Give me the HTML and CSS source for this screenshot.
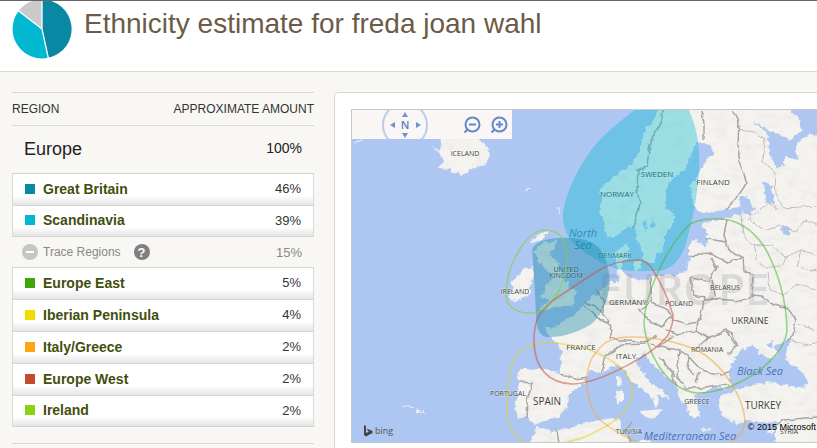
FILE: index.html
```
<!DOCTYPE html>
<html lang="en">
	<head>
		<meta charset="utf-8">
		<title>Ethnicity estimate</title>
		<link rel="stylesheet" href="styles.css">
	</head>
	<body>
		<header>
			<svg class="pie" viewBox="0 0 60 60" aria-hidden="true">
				<path fill="#0a87a3" d="M30 30V0.500A29.500 29.500 0 0 1 36.500 58.800Z"/>
				<path fill="#00b9d1" d="M30 30L36.500 58.800A29.500 29.500 0 0 1 6.700 12Z"/>
				<path fill="#cacaca" d="M30 30L6.700 12A29.500 29.500 0 0 1 30 0.500Z"/>
				<path fill="none" stroke="#fff" stroke-width="1.300" d="M30 0V30L36.500 60M30 30L6 11.500"/>
			</svg>
			<h1>Ethnicity estimate for freda joan wahl</h1>
		</header>
		<main>
			<section class="regions">
				<table>
					<thead>
						<tr><th>REGION</th><th class="amount">APPROXIMATE AMOUNT</th></tr>
					</thead>
					<tbody>
						<tr class="total"><td>Europe</td><td class="amount">100%</td></tr>
						<tr class="region"><td><a href="#"><i class="swatch britain"></i>Great Britain</a></td><td class="amount">46%</td></tr>
						<tr class="region last"><td><a href="#"><i class="swatch scandinavia"></i>Scandinavia</a></td><td class="amount">39%</td></tr>
						<tr class="trace">
							<td>
								<div class="trace-label">
									<button class="round toggle" aria-label="Hide trace regions"></button>
									<span>Trace Regions</span>
									<button class="round help" aria-label="Help">?</button>
								</div>
							</td>
							<td class="amount">15%</td>
						</tr>
						<tr class="region"><td><a href="#"><i class="swatch east"></i>Europe East</a></td><td class="amount">5%</td></tr>
						<tr class="region"><td><a href="#"><i class="swatch iberia"></i>Iberian Peninsula</a></td><td class="amount">4%</td></tr>
						<tr class="region"><td><a href="#"><i class="swatch italy"></i>Italy/Greece</a></td><td class="amount">2%</td></tr>
						<tr class="region"><td><a href="#"><i class="swatch west"></i>Europe West</a></td><td class="amount">2%</td></tr>
						<tr class="region last"><td><a href="#"><i class="swatch ireland"></i>Ireland</a></td><td class="amount">2%</td></tr>
					</tbody>
				</table>
			</section>
			<section class="map-panel">
				<div class="map">
					<svg class="map-canvas" viewBox="352 110 465 332" preserveAspectRatio="xMinYMin slice" role="img" aria-label="Map of Europe">
						<defs>
							<filter id="coast" x="0" y="0" width="100%" height="100%">
								<feTurbulence type="fractalNoise" baseFrequency="0.18" numOctaves="3" seed="4"/>
								<feDisplacementMap in="SourceGraphic" scale="6" xChannelSelector="R" yChannelSelector="G"/>
							</filter>
							<filter id="frontier" x="0" y="0" width="100%" height="100%">
								<feTurbulence type="fractalNoise" baseFrequency="0.12" numOctaves="2" seed="4"/>
								<feDisplacementMap in="SourceGraphic" scale="5" xChannelSelector="R" yChannelSelector="G"/>
							</filter>
							<filter id="relief" x="0" y="0" width="100%" height="100%">
								<feTurbulence type="fractalNoise" baseFrequency="0.07 0.14" numOctaves="4" seed="9"/>
								<feColorMatrix values="0 0 0 0 0.600  0 0 0 0 0.580  0 0 0 0 0.560  0 0 0 1.800 -0.800"/>
								<feComposite in2="SourceGraphic" operator="in"/>
							</filter>
							<g id="land">
								<!-- mainland, clockwise from northern Norway -->
								<path d="M662 100L655 118L645 130L640 150L632 165L619 172L609 182L599 190L602 200L599 210L605 220L604 230L609 237L620 233L630 225L635 228L637 240L642 253L645 263L654 263L657 253L664 250L664 237L674 223L672 213L665 207L667 187L674 177L687 167L689 157L697 142L710 145L714 153L704 163L699 173L692 182L690 187L694 207L702 214L724 210L742 206L742 214L724 218L704 223L702 228L708 233L706 247L694 240L689 247L689 260L687 270L677 275L660 275L644 280L630 278L624 275L622 262L629 255L627 243L615 253L617 268L619 282L610 282L602 290L584 305L575 315L562 322L558 327L545 328L548 335L557 343L562 352L560 372L545 370L525 368L516 373L520 382L517 398L515 408L518 418L528 418L535 425L545 420L558 418L567 408L568 395L585 383L584 378L590 370L602 373L614 365L624 368L630 380L644 390L652 397L655 408L660 402L657 395L669 398L660 388L649 382L640 368L635 362L645 353L650 362L664 375L677 387L680 398L687 408L692 417L700 417L697 405L694 395L704 392L714 387L724 388L732 385L729 372L734 360L740 352L754 343L759 353L769 360L777 355L774 348L784 340L792 337L787 350L785 360L804 373L807 383L804 388L784 385L767 382L744 388L730 392L720 397L719 408L724 418L737 423L750 420L764 423L777 422L774 446H830V100Z"/>
								<!-- Britain and Ireland -->
								<path d="M541 243L556 241L554 249L549 254L556 260L560 270L565 279L569 288L577 290L574 300L572 306L555 307L543 310L539 308L549 301L541 297L546 291L544 284L551 281L550 273L544 268L538 262L534 252Z"/>
								<path d="M524 269L533 267L534 276L531 285L531 294L521 299L512 301L508 296L514 290L511 282L516 278Z"/>
								<path d="M531 241L540 234L549 230L544 237L534 244Z"/>
								<!-- Iceland -->
								<path d="M436 110L441 152L431 144L441 155L444 160L438 168L450 169L453 173L463 175L475 168L485 165L490 155L487 145L478 140L470 130Z"/>
								<!-- Mediterranean islands and the African coast -->
								<path d="M616 377L621 376L622 385L618 387ZM616 391L623 389L623 401L617 404ZM640 411L662 409L658 417L649 419ZM702 428L714 430L703 431ZM767 432L777 427L771 434ZM530 442L537 427L552 431L570 428L590 422L612 418L621 421L620 432L630 438L631 446H530ZM640 440L655 442V448H640Z"/>
								<path d="M618 255L625 248L624 260ZM634 263L641 259L641 269L635 271Z"/>
							</g>
							<g id="water">
								<path d="M752 121L767 129L790 140L802 130L800 120L790 108H830V135L810 134L800 140L795 152L799 160L784 157L785 165L777 168L769 153L767 133Z"/>
								<path d="M739 195L750 199L755 210L750 216L742 211ZM763 181L771 185L775 202L766 203ZM782 224L790 227L790 237L783 235ZM767 344L773 341L772 349Z"/>
								<path d="M641 222L648 221L646 231ZM651 219L656 226L651 229Z"/>
							</g>
						</defs>
						<rect x="352" y="110" width="2000" height="332" fill="#adc7f2"/>
						<g filter="url(#coast)">
							<use href="#land" fill="#f5f3f0"/>
							<use href="#water" fill="#adc7f2"/>
							<path fill="none" stroke="#f5f3f0" d="M524 190L530 188M557 207L560 214M403 406L415 408M416 410L424 412M352 143L362 140"/>
						</g>
						<use href="#land" fill="#fff" filter="url(#relief)" opacity=".25"/>
						<g filter="url(#frontier)" fill="none" stroke="#a9a6a4" stroke-width="1.500" stroke-linejoin="round">
							<path d="M662 110L660 125L652 138L649 150L647 165L638 170L637 190L640 203L637 215L634 228"/>
							<path d="M702 110L704 125L704 141M733 110L739 122L738 145L740 165L747 182L737 198L726 209"/>
							<path d="M727 219L724 235L729 250L744 258L745 270L753 275L752 296L762 297L775 305L788 309L796 319L793 335L787 340"/>
							<path d="M707 239L727 242M689 256L710 254L728 262L742 258M710 258L717 268L708 281L692 277M690 277L693 295L705 298L700 318L697 322M712 280L716 299L704 300M716 299L740 301L752 297M650 278L652 300L640 311L652 324L662 326L672 317L668 310L652 303M671 319L688 324L697 322L695 331L676 334L665 330M695 331L709 338L726 330L732 333L737 345L728 354M726 330L737 347M709 338L694 351M585 302L595 306L606 318L612 330L610 338L625 341L645 342L658 335M597 290L604 302L602 313M585 306L600 320L612 325M560 374L575 379L588 377M520 382L532 383L527 401L526 418M602 373L606 355L622 345L646 344M659 347L680 350L677 375L686 388L705 388L728 384M659 357L671 371L675 376M681 351L689 357L701 370L722 375L729 371M650 344L659 347L673 336M672 374L677 388M699 373L696 384M689 357L687 367L694 375M557 430L559 445M631 422L625 432L631 442M773 426L784 420L817 417"/>
							<g stroke="#c2c0be" stroke-width="1">
								<path d="M738 130L754 132L765 140L763 161L775 172L776 195L784 208L817 206M748 219L768 204L778 209M741 215L743 235L750 244L772 246L786 257L801 250L817 255M753 244L757 262L766 268L780 266L786 257M768 272L770 290L782 294L797 285L817 290M801 250L797 267L817 271M750 218L762 230L778 226L796 231L805 220L817 225M792 340L804 346L817 342M797 324L817 330"/>
							</g>
						</g>
						<text class="continent" x="598" y="305">EUROPE</text>
						<g class="labels">
							<text class="small" x="465" y="156">ICELAND</text>
							<text x="657" y="177">SWEDEN</text>
							<text x="617" y="197">NORWAY</text>
							<text x="713" y="185">FINLAND</text>
							<text class="small" x="615" y="258">DENMARK</text>
							<text class="small" x="566" y="272">UNITED</text>
							<text class="small" x="566" y="278">KINGDOM</text>
							<text class="small" x="515" y="294">IRELAND</text>
							<text x="628" y="305">GERMANY</text>
							<text class="small" x="679" y="306">POLAND</text>
							<text class="small" x="725" y="290">BELARUS</text>
							<text class="medium" x="750" y="324">UKRAINE</text>
							<text x="581" y="350">FRANCE</text>
							<text x="626" y="359">ITALY</text>
							<text class="small" x="707" y="352">ROMANIA</text>
							<text class="small" x="508" y="396">PORTUGAL</text>
							<text class="large" x="547" y="405">SPAIN</text>
							<text class="small" x="697" y="404">GREECE</text>
							<text class="large" x="763" y="409">TURKEY</text>
							<text class="small" x="629" y="434">TUNISIA</text>
							<text class="small" x="789" y="434">SYRIA</text>
						</g>
						<g class="seas">
							<text x="583" y="237">North</text>
							<text x="583" y="249">Sea</text>
							<text x="760" y="375">Black Sea</text>
							<text x="690" y="440">Mediterranean Sea</text>
						</g>
						<!-- regions with a high share are filled, the trace ones outlined -->
						<path fill="#00b9d1" fill-opacity=".36" d="M637 108C620 122 605 132 592 149C578 168 567 190 563 212C562 228 568 240 580 249C598 262 612 270 632 271H655C672 271 682 258 686 243C692 222 697 200 699 170C700 148 698 130 688 108Z"/>
						<path fill="#0a87a3" fill-opacity=".38" d="M532 250C534 243 544 238 560 238C580 237 592 240 600 249C608 262 611 275 609 290C605 308 600 317 590 325C577 332 562 338 546 337C538 335 536 325 536 315C535 295 534 270 532 250Z"/>
						<g fill="none" stroke-width="1.600" stroke-opacity=".55">
							<path stroke="#82cf3a" d="M545 230C525 231 505 268 506 297C508 309 520 314 535 313C555 310 568 275 567 255C566 240 560 230 545 230Z"/>
							<path stroke="#4fb832" d="M712 219C735 217 752 228 765 248C778 271 787 302 787 331C783 362 735 393 697 393C665 390 645 348 644 323C645 295 664 250 690 224Q700 219 712 219Z"/>
							<path stroke="#e0d22a" d="M544 343C520 347 517 352 513 362C506 380 506 410 508 422Q515 440 530 445Q575 445 597 431C620 420 634 405 632 388C631 367 592 342 544 343Z"/>
							<path stroke="#f3a53c" d="M633 337C608 337 602 343 592 358C582 378 588 408 600 420Q625 440 650 446H725Q745 436 745 420C743 397 725 369 705 355C690 345 660 337 633 337Z"/>
							<path stroke="#c9533d" d="M639 260Q614 260 596 272L552 301C537 314 534 324 534 340C534 370 550 383 572 384C598 384 655 354 668 335Q674 322 673 315Q666 290 651 267Q646 261 639 260Z"/>
						</g>
					</svg>
					<div class="map-controls">
						<div class="compass">
							<button class="up" aria-label="Pan north"></button>
							<button class="left" aria-label="Pan west"></button>
							<span>N</span>
							<button class="right" aria-label="Pan east"></button>
							<button class="down" aria-label="Pan south"></button>
						</div>
						<div class="zoom">
							<button aria-label="Zoom out"><svg viewBox="0 0 18 18"><circle cx="9.500" cy="8.500" r="7"/><path d="M4.500 13.500L1.500 16.500M6 8.500H13"/></svg></button>
							<button aria-label="Zoom in"><svg viewBox="0 0 18 18"><circle cx="9.500" cy="8.500" r="7"/><path d="M4.500 13.500L1.500 16.500M6 8.500H13M9.500 5V12"/></svg></button>
						</div>
					</div>
					<div class="brand">
						<svg viewBox="0 0 10 12" aria-hidden="true"><path fill="#444" d="M1 0L3 1V8L6 6.500L4.800 6L4 3.800L9.500 6V8L3 11.500L1 10Z"/></svg>
						<span>bing</span>
					</div>
					<div class="copyright">© 2015 Microsoft</div>
				</div>
			</section>
		</main>
	</body>
</html>
```
FILE: styles.css
```
body {
	margin: 0;
	background-color: #f8f7f3;
	color: #333;
	font-family: "Liberation Sans", Arial, sans-serif;
	font-size: 13px;
	overflow: hidden;
}

* {
	box-sizing: border-box;
}

header {
	display: flex;
	align-items: flex-start;
	gap: 12px;
	height: 72px;
	padding-left: 12px;
	background-color: #fff;
	border-top: 1px solid #666;
	border-bottom: 1px solid #d9d9d1;
	overflow: hidden;
}

.pie {
	width: 60px;
	height: 60px;
	margin-top: -2px;
}

h1 {
	margin: 6px 0 0;
	color: #6b5b47;
	font-size: 28px;
	font-weight: 400;
	line-height: 34px;
	white-space: nowrap;
}

main {
	display: flex;
	align-items: flex-start;
	gap: 20px;
	padding: 20px 0 0 12px;
}

button {
	padding: 0;
	border: 0;
	background: none;
	cursor: pointer;
}

.regions {
	flex: 0 0 302px;
	padding-bottom: 16px;
	border-bottom: 1px solid #d9d9d5;
}

table {
	width: 100%;
	border-collapse: separate;
	border-spacing: 0;
}

th, td {
	padding: 0;
	text-align: left;
}

th {
	height: 34px;
	border-top: 1px solid #d9d9d5;
	border-bottom: 1px solid #d9d9d5;
	font-size: 12px;
	font-weight: 400;
}

.amount {
	text-align: right;
}

td.amount {
	padding-right: 12px;
}

.total td {
	height: 47px;
	padding-left: 12px;
	color: #222;
	font-size: 18px;
}

.total td.amount {
	padding-bottom: 4px;
	font-size: 14px;
}

.region td {
	height: 32px;
	padding-bottom: 2px;
	border-top: 1px solid #d4d4d4;
	background: linear-gradient(#fff 70%, #e6e4e5);
}

.region td:first-child {
	border-left: 1px solid #d9d9d9;
}

.region td:last-child {
	border-right: 1px solid #d9d9d9;
}

.region.last td {
	border-bottom: 1px solid #d4d4d4;
}

.region a {
	display: flex;
	align-items: center;
	gap: 8px;
	padding-left: 12px;
	color: #3f500c;
	font-size: 14px;
	font-weight: 700;
	text-decoration: none;
}

.swatch {
	width: 10px;
	height: 10px;
}

.britain { background-color: #0a87a3; }
.scandinavia { background-color: #00b9d1; }
.east { background-color: #3fa50a; }
.iberia { background-color: #f2dc00; }
.italy { background-color: #ffa412; }
.west { background-color: #c44a2b; }
.ireland { background-color: #86d40f; }

.trace td {
	height: 30px;
	color: #888;
}

.trace-label {
	display: flex;
	align-items: center;
	gap: 5px;
	padding-left: 10px;
	font-size: 12px;
}

.round {
	display: flex;
	align-items: center;
	justify-content: center;
	width: 16px;
	height: 16px;
	border-radius: 50%;
	color: #fff;
	font-family: inherit;
	font-size: 13px;
	font-weight: 700;
}

.toggle {
	background-color: #c6c6c6;
}

.toggle::before {
	content: "";
	width: 8px;
	height: 2px;
	background-color: #fff;
}

.help {
	margin-left: 8px;
	background-color: #808080;
}

.map-panel {
	flex: 1;
	min-width: 0;
	padding: 16px 0 16px 16px;
	background-color: #fff;
	border: 1px solid #d9d7cf;
	border-right: 0;
	border-radius: 5px 0 0 5px;
}

.map {
	position: relative;
	border: 1px solid #c8c8c8;
	border-right: 0;
	overflow: hidden;
}

.map-canvas {
	display: block;
	width: 100%;
	height: 332px;
}

.labels text {
	fill: #3c3c3c;
	stroke: #fff;
	stroke-opacity: .5;
	stroke-width: 1px;
	paint-order: stroke;
	font-family: "Open Sans", sans-serif;
	font-size: 8px;
	text-anchor: middle;
}

.labels .small {
	font-size: 7px;
}

.labels .medium {
	font-size: 9px;
}

.labels .large {
	font-size: 10px;
}

.continent {
	fill: #8d8d99;
	fill-opacity: .26;
	font-family: "Open Sans", sans-serif;
	font-size: 44px;
	font-weight: 600;
}

.seas text {
	fill: #4e74b4;
	font-family: "Open Sans", sans-serif;
	font-size: 11px;
	font-style: italic;
	text-anchor: middle;
}

.map-controls {
	position: absolute;
	top: 0;
	left: 0;
	display: flex;
	align-items: center;
	justify-content: space-between;
	width: 160px;
	height: 29px;
	padding: 0 4px 0 30px;
	background-color: #faf6f5;
	overflow: hidden;
}

.compass {
	display: grid;
	grid-template-columns: 10px 16px 10px;
	grid-template-rows: 7px 14px 7px;
	grid-template-areas: ". up ." "left n right" ". down .";
	place-content: center;
	place-items: center;
	flex: none;
	width: 46px;
	height: 46px;
	border: 2px solid #bccdec;
	border-radius: 50%;
	color: #5b7fc4;
	font-family: "Open Sans", sans-serif;
	font-size: 11px;
	font-weight: 600;
	line-height: 14px;
}

.compass span {
	grid-area: n;
}

.compass button {
	width: 0;
	height: 0;
	border: 3px solid transparent;
}

.compass .up {
	grid-area: up;
	border-top: 0;
	border-bottom: 5px solid #6f92cf;
}

.compass .down {
	grid-area: down;
	border-bottom: 0;
	border-top: 5px solid #6f92cf;
}

.compass .left {
	grid-area: left;
	border-left: 0;
	border-right: 5px solid #6f92cf;
}

.compass .right {
	grid-area: right;
	border-right: 0;
	border-left: 5px solid #6f92cf;
}

.zoom {
	display: flex;
	gap: 9px;
}

.zoom svg {
	display: block;
	width: 18px;
	height: 18px;
	fill: none;
	stroke: #6488ca;
	stroke-width: 2;
}

.brand {
	position: absolute;
	left: 11px;
	bottom: 4px;
	display: flex;
	align-items: center;
	gap: 2px;
	color: #555;
	font-family: "Open Sans", sans-serif;
	font-size: 9px;
	line-height: 14px;
}

.brand svg {
	width: 10px;
	height: 12px;
}

.copyright {
	position: absolute;
	right: 1px;
	bottom: 9px;
	color: #000;
	font-size: 9px;
	line-height: 12px;
	white-space: nowrap;
}
```
